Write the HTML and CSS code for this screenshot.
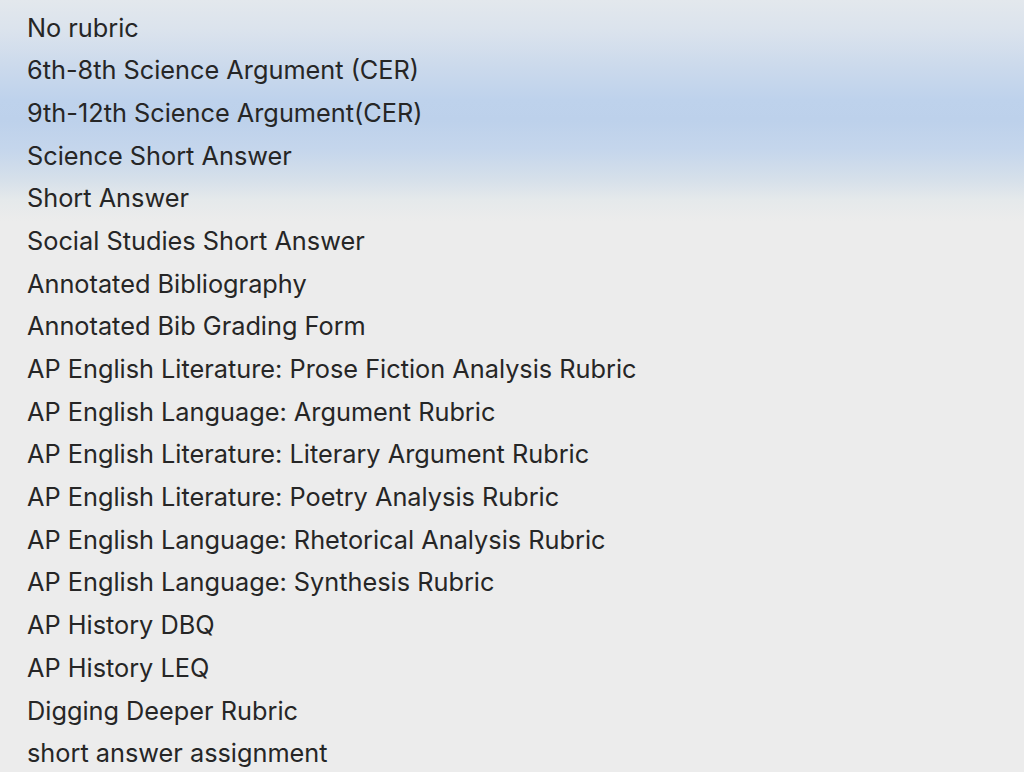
FILE: index.html
```html
<!DOCTYPE html>
<html>
<head>
<meta charset="utf-8">
<link rel="stylesheet" href="styles.css">
</head>
<body>
<ul class="menu">
  <li class="item">No rubric</li>
  <li class="item">6th-8th Science Argument (CER)</li>
  <li class="item">9th-12th Science Argument(CER)</li>
  <li class="item">Science Short Answer</li>
  <li class="item">Short Answer</li>
  <li class="item">Social Studies Short Answer</li>
  <li class="item">Annotated Bibliography</li>
  <li class="item">Annotated Bib Grading Form</li>
  <li class="item">AP English Literature: Prose Fiction Analysis Rubric</li>
  <li class="item">AP English Language: Argument Rubric</li>
  <li class="item">AP English Literature: Literary Argument Rubric</li>
  <li class="item">AP English Literature: Poetry Analysis Rubric</li>
  <li class="item">AP English Language: Rhetorical Analysis Rubric</li>
  <li class="item">AP English Language: Synthesis Rubric</li>
  <li class="item">AP History DBQ</li>
  <li class="item">AP History LEQ</li>
  <li class="item">Digging Deeper Rubric</li>
  <li class="item">short answer assignment</li>
</ul>
</body>
</html>
```

FILE: styles.css
```css
html, body {
  margin: 0;
  padding: 0;
  height: 100%;
  overflow: hidden;
}
body {
  background: linear-gradient(to bottom,
    #e3e8ed 0px,
    #dbe3ed 30px,
    #ccdaec 65px,
    #bed2ec 100px,
    #bdd1eb 120px,
    #c5d6ec 150px,
    #d6e0ea 180px,
    #e5e9eb 200px,
    #ececec 222px,
    #ececec 100%);
  font-family: Inter, "Noto Sans", sans-serif;
  color: #262626;
}
.menu {
  list-style: none;
  margin: 0;
  padding: 6.5px 0 0 27px;
}
.item {
  height: 42.7px;
  line-height: 42.7px;
  font-size: 25.3px;
  white-space: nowrap;
}
```
